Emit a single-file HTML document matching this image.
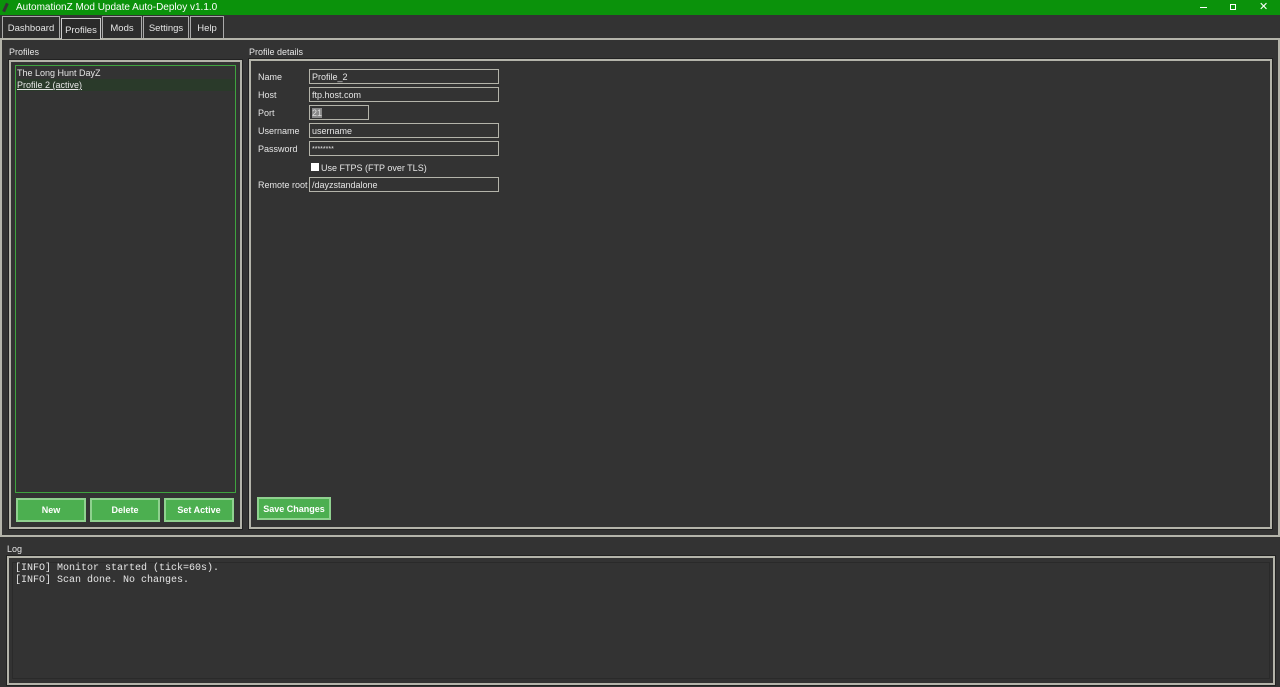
<!DOCTYPE html>
<html><head><style>
*{margin:0;padding:0;box-sizing:border-box}
body{width:1280px;height:687px;background:#333;font-family:"Liberation Sans",sans-serif;font-size:9px;color:#e6e6e6;position:relative;overflow:hidden}
.a{position:absolute}
.title{left:0;top:0;width:1280px;height:15px;background:#0b920b;color:#fff;font-size:10px;line-height:15px;padding-left:16px}
.tab{top:16px;height:22px;background:#2d2d2d;border:1px solid #aaa;border-bottom:none;line-height:23px;text-align:center;font-size:9.5px}
.frame{border:2px solid #b4b4aa;outline:1px solid #222}
.lbl{font-size:9px;margin-top:1px}
.ent{left:309px;width:190px;height:15px;border:1px solid #b4b4aa;background:#333;line-height:15px;padding-left:2px;font-size:9px}
.btn{top:498px;height:24px;background:#4caf50;border:2px solid #8fd18f;outline:1px solid #333;color:#fff;font-weight:bold;text-align:center;line-height:21px;font-size:9px}
</style></head><body>
<div class="a title">AutomationZ Mod Update Auto-Deploy v1.1.0</div>
<div class="a" style="left:4px;top:3px;width:3px;height:9px;background:#333;transform:rotate(25deg)"></div>
<div class="a" style="left:1200px;top:7px;width:7px;height:1px;background:#fff"></div>
<div class="a" style="left:1230px;top:4px;width:6px;height:6px;border:1px solid #fff"></div>
<div class="a" style="left:1259px;top:0;color:#fff;font-size:11px;line-height:15px">✕</div>
<div class="a" style="left:0;top:38px;width:1280px;height:499px;border:2px solid #b4b4aa;border-top-width:2px"></div>
<div class="a tab" style="left:2px;width:58px">Dashboard</div>
<div class="a tab" style="left:61px;top:18px;height:21px;width:40px;background:#2a2a2a;border-color:#ccc">Profiles</div>
<div class="a tab" style="left:102px;width:40px">Mods</div>
<div class="a tab" style="left:143px;width:46px">Settings</div>
<div class="a tab" style="left:190px;width:34px">Help</div>
<div class="a lbl" style="left:9px;top:46px">Profiles</div>
<div class="a frame" style="left:9px;top:60px;width:233px;height:469px"></div>
<div class="a" style="left:15px;top:65px;width:221px;height:428px;border:1px solid #3fa33f;background:#333"></div>
<div class="a" style="left:16px;top:79px;width:219px;height:12px;background:#2a3a2a"></div>
<div class="a" style="left:17px;top:68px;font-size:9px">The Long Hunt DayZ</div>
<div class="a" style="left:17px;top:80px;font-size:9px;text-decoration:underline">Profile 2 (active)</div>
<div class="a btn" style="left:16px;width:70px">New</div>
<div class="a btn" style="left:90px;width:70px">Delete</div>
<div class="a btn" style="left:164px;width:70px">Set Active</div>
<div class="a lbl" style="left:249px;top:46px">Profile details</div>
<div class="a frame" style="left:249px;top:59px;width:1023px;height:470px"></div>
<div class="a lbl" style="left:258px;top:71px">Name</div>
<div class="a ent" style="top:69px">Profile_2</div>
<div class="a lbl" style="left:258px;top:89px">Host</div>
<div class="a ent" style="top:87px">ftp.host.com</div>
<div class="a lbl" style="left:258px;top:107px">Port</div>
<div class="a ent" style="top:105px;width:60px"><span style="background:#888;color:#ddd">21</span></div>
<div class="a lbl" style="left:258px;top:125px">Username</div>
<div class="a ent" style="top:123px">username</div>
<div class="a lbl" style="left:258px;top:143px">Password</div>
<div class="a ent" style="top:141px;font-size:7px">********</div>
<div class="a" style="left:311px;top:163px;width:8px;height:8px;background:#fff"></div>
<div class="a lbl" style="left:321px;top:162px">Use FTPS (FTP over TLS)</div>
<div class="a lbl" style="left:258px;top:179px">Remote root</div>
<div class="a ent" style="top:177px">/dayzstandalone</div>
<div class="a btn" style="left:257px;top:497px;width:74px;height:23px;line-height:20px">Save Changes</div>
<div class="a lbl" style="left:7px;top:543px">Log</div>
<div class="a frame" style="left:7px;top:556px;width:1268px;height:129px"></div>
<div class="a" style="left:12px;top:562px;width:1258px;height:117px;border:1px solid #2a2a2a"></div>
<div class="a" style="left:15px;top:563px;font-family:'Liberation Mono',monospace;font-size:10px;line-height:12px;white-space:pre">[INFO] Monitor started (tick=60s).
[INFO] Scan done. No changes.</div>
</body></html>
